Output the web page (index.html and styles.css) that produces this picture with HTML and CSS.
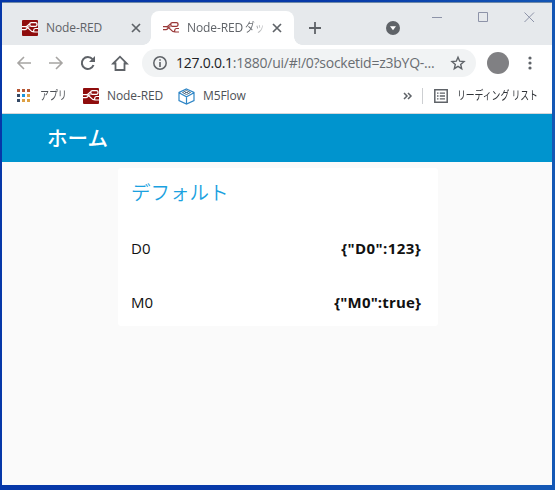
FILE: index.html
```html
<!DOCTYPE html>
<html lang="ja">
<head>
<meta charset="utf-8">
<title>Node-RED ダッシュボード</title>
<link rel="stylesheet" href="styles.css">
</head>
<body>
<svg class="defs" aria-hidden="true">
  <symbol id="nodes" viewBox="0 0 16 16">
    <path d="M0 6.700h3.500c2.500 0 2.200-2.500 4.500-2.500M3 6.700c4.500 0 4 5.300 9 5.300h4M0 9.700h3c2 0 2-3 4.500-3M16 8.500h-2.500c-2 0-2.500 3.500-1 3.500" fill="none" stroke="currentColor" stroke-width="1.200"/>
    <rect x="7.800" y="2.600" width="7.200" height="3.700" rx="1.500" fill="none" stroke="currentColor" stroke-width="1.300"/>
  </symbol>
  <symbol id="close" viewBox="0 0 10 10"><path d="M1 1l8 8M9 1l-8 8" fill="none" stroke="#5f6368" stroke-width="1.700"/></symbol>
</svg>
<div class="window">
  <div class="tabs">
    <div class="tab">
      <svg class="fav red"><use href="#nodes"/></svg>
      <span class="tab-title">Node-RED</span>
      <svg class="close" viewBox="0 0 10 10"><use href="#close"/></svg>
    </div>
    <div class="tab active">
      <svg class="fav plain"><use href="#nodes"/></svg>
      <span class="tab-title">Node-RED<span class="kana">ダッ</span></span>
      <svg class="close" viewBox="0 0 10 10"><use href="#close"/></svg>
    </div>
    <svg class="plus" viewBox="0 0 12 12"><path d="M6 0v12M0 6h12" stroke="#5f6368" stroke-width="1.800"/></svg>
    <svg class="drop" viewBox="0 0 14 14"><circle cx="7" cy="7" r="7" fill="#5f6368"/><path d="M4 5.300h6L7 9.300z" fill="#fff"/></svg>
    <svg class="controls" viewBox="0 0 104 12"><path d="M0 7.500h10M46.500 2.500h9v9h-9zM92.500 2.500l9.500 9.500M102 2.500L92.500 12" fill="none" stroke="#8d93a8"/></svg>
  </div>
  <div class="toolbar">
    <svg class="nav back" viewBox="0 0 14 14"><path d="M14 7H1.500M7 1L1 7l6 6" fill="none" stroke="#a7a5a3" stroke-width="1.600"/></svg>
    <svg class="nav forward" viewBox="0 0 14 14"><path d="M0 7h12.500M7 1l6 6-6 6" fill="none" stroke="#a7a5a3" stroke-width="1.600"/></svg>
    <svg class="nav reload" viewBox="0 0 14 14"><path d="M12.500 9A6 6 0 1 1 11.500 3.200" fill="none" stroke="#5f6368" stroke-width="2"/><path d="M14 0v6H8z" fill="#5f6368"/></svg>
    <svg class="nav home" viewBox="0 0 16 16"><path d="M1.200 8.500L8 1.700l6.800 6.800H12.500V15h-9V8.500z" fill="none" stroke="#5f6368" stroke-width="1.800"/></svg>
    <div class="address">
      <svg class="info" viewBox="0 0 14 14"><circle cx="7" cy="7" r="6.200" fill="none" stroke="#5f6368" stroke-width="1.500"/><path d="M7 6v5M7 3.200v1.600" stroke="#5f6368" stroke-width="1.600"/></svg>
      <span class="url"><b>127.0.0.1</b>:1880/ui/#!/0?socketid=z3bYQ-...</span>
      <svg class="star" viewBox="0 0 14 14"><path d="M7 1.200l1.700 4 4.300.4-3.300 2.800 1 4.300L7 10.400l-3.700 2.300 1-4.300L1 5.600l4.300-.4z" fill="none" stroke="#5f6368" stroke-width="1.400"/></svg>
    </div>
    <span class="avatar"></span>
    <svg class="more" viewBox="0 0 4 14"><circle cx="2" cy="2" r="1.600"/><circle cx="2" cy="7" r="1.600"/><circle cx="2" cy="12" r="1.600"/></svg>
  </div>
  <div class="bookmarks">
    <svg class="apps" viewBox="0 0 14 14"><path d="M0 0h3v3H0zM5 0h3v3H5zM10 0h3v3h-3z" fill="#b65937"/><path d="M0 5h3v3H0zM0 10h3v3H0z" fill="#344966"/><path d="M5 5h3v3H5z" fill="#1796df"/><path d="M10 5h3v3h-3zM5 10h3v3H5zM10 10h3v3h-3z" fill="#dda044"/></svg>
    <span class="mark kana apps-label">アプリ</span>
    <svg class="fav red mark-red"><use href="#nodes"/></svg>
    <span class="mark node-label">Node-RED</span>
    <svg class="cube" viewBox="0 0 17 17"><path d="M8.500 1L16 4.500v8L8.500 16 1 12.500v-8zM1 4.700L8.500 8.700 16 4.700M8.500 8.700V16" fill="none" stroke="#2f86c6" stroke-width="1.200"/><path d="M4.500 4.500l4-2 4 2-4 2zM7 4.500h3" fill="none" stroke="#55738a"/></svg>
    <span class="mark flow-label">M5Flow</span>
    <svg class="chevrons" viewBox="0 0 9 8"><path d="M1 1l3 3-3 3M5 1l3 3-3 3" fill="none" stroke="#5f6368" stroke-width="1.500"/></svg>
    <span class="rule"></span>
    <svg class="list" viewBox="0 0 14 14"><path d="M.8.800h12.400v12.400H.8z" fill="none" stroke="#5f6368" stroke-width="1.500"/><path d="M3 4.200h1.500M5.800 4.200H11M3 7h1.500M5.800 7H11M3 9.800h1.500M5.800 9.800H11" stroke="#5f6368" stroke-width="1.300"/></svg>
    <span class="mark kana reading">リーディング リスト</span>
  </div>
  <header><h1>ホーム</h1></header>
  <main>
    <section class="card">
      <h2>デフォルト</h2>
      <div class="row"><span>D0</span><strong class="d0">{"D0":123}</strong></div>
      <div class="row"><span>M0</span><strong class="m0">{"M0":true}</strong></div>
    </section>
  </main>
</div>
</body>
</html>
```
FILE: styles.css
```css
* { box-sizing: border-box; }
body { margin: 0; width: 555px; height: 490px; padding: 2px 3px 5px 2px; overflow: hidden; background: linear-gradient(100deg, #0637a8 0%, #0739a8 50%, #1458b5 90%); font-family: "Open Sans", "Noto Sans CJK JP", sans-serif; }
svg { display: block; flex: none; overflow: visible; }
.defs { position: absolute; width: 0; height: 0; }
.window { width: 550px; height: 483px; background: #fafafa; }
.tabs { height: 43px; display: flex; background: #e6e9ec; border-top: 1px solid #708aa8; }
.tab { display: flex; align-items: center; height: 34px; margin-top: 8px; width: 149px; padding-left: 20px; white-space: nowrap; color: #5f6368; font-size: 12px; }
.tab.active { width: 143px; padding-left: 12px; background: #fff; border-radius: 8px 8px 0 0; position: relative; }
.tab.active::before, .tab.active::after { content: ""; position: absolute; bottom: 0; width: 8px; height: 8px; }
.tab.active::before { left: -8px; background: radial-gradient(circle at 0 0, transparent 7.5px, #fff 8px); }
.tab.active::after { right: -8px; background: radial-gradient(circle at 100% 0, transparent 7.5px, #fff 8px); }
.fav { width: 16px; height: 16px; }
.red { color: #fff; background: #8f0d0d; border-radius: 1px; }
.plain { color: #9a3838; }
.tab-title { width: 77px; margin-left: 8px; line-height: 18px; letter-spacing: -.1px; }
.tab-title .kana { width: 20px; margin-left: 2px; letter-spacing: 0; transform: scaleX(.82); }
.active .tab-title { -webkit-mask-image: linear-gradient(90deg, #000 62px, transparent 82px); mask-image: linear-gradient(90deg, #000 62px, transparent 82px); }
.close { width: 10px; height: 10px; margin-left: 8px; }
.plus { width: 12px; height: 12px; margin: 19px 0 0 15px; }
.drop { width: 14px; height: 14px; margin: 18px 0 0 65px; }
.controls { width: 104px; height: 12px; margin: 7px 0 0 32px; }
.toolbar { height: 36px; display: flex; align-items: center; background: #fff; }
.nav { width: 14px; height: 14px; margin-left: 15px; }
.forward { margin-left: 18px; }
.reload { margin-left: 18px; }
.home { width: 16px; height: 16px; margin-left: 17px; }
.address { width: 334px; height: 28px; margin-left: 14px; border-radius: 14px; background: #f1f3f4; display: flex; align-items: center; padding-left: 11px; }
.info { width: 14px; height: 14px; }
.url { width: 260px; margin-left: 9px; font-size: 14px; line-height: 20px; letter-spacing: -.25px; color: #696d72; white-space: nowrap; }
.url b { font-weight: 400; color: #202124; }
.star { width: 14px; height: 14px; margin-left: 15px; }
.avatar { width: 22px; height: 22px; margin-left: 11px; border-radius: 50%; background: #808083; }
.more { width: 4px; height: 14px; margin-left: 19px; fill: #5f6368; }
.bookmarks { height: 33px; display: flex; align-items: center; background: #fff; border-bottom: 1px solid #d4d7da; padding-bottom: 2px; }
.apps { width: 14px; height: 14px; margin-left: 15px; }
.mark { font-size: 12px; line-height: 18px; color: #4d5156; white-space: nowrap; letter-spacing: -.1px; }
.kana { display: inline-block; transform-origin: 0 50%; }
.apps-label { width: 27px; margin-left: 9px; transform: scaleX(.75); }
.mark-red { margin-left: 16px; }
.node-label { width: 56px; margin-left: 8px; }
.cube { width: 17px; height: 17px; margin-left: 15px; }
.flow-label { width: 43px; margin-left: 8px; }
.chevrons { width: 9px; height: 8px; margin-left: 157px; }
.rule { width: 1px; height: 16px; margin-left: 10px; background: #cdcfd2; }
.list { width: 14px; height: 14px; margin-left: 11px; }
.reading { margin-left: 9px; width: 80px; transform: scaleX(.74); color: #303338; }
header { height: 48px; background: #0094ce; padding-left: 45px; }
h1 { margin: 0; font-size: 20.5px; line-height: 48px; font-weight: 500; color: #fff; }
main { padding: 6px 0 0 116px; }
.card { width: 320px; height: 158px; background: #fff; border-radius: 3px; padding: 0 17px 0 13px; }
h2 { margin: 0; height: 54px; font-size: 19.5px; line-height: 50px; font-weight: 350; color: #1aa1e0; }
.row { height: 54px; display: flex; justify-content: space-between; line-height: 53px; color: #111; font-size: 15px; }
strong { font-weight: 700; }
.d0 { letter-spacing: .4px; }
.m0 { letter-spacing: .15px; }
```
